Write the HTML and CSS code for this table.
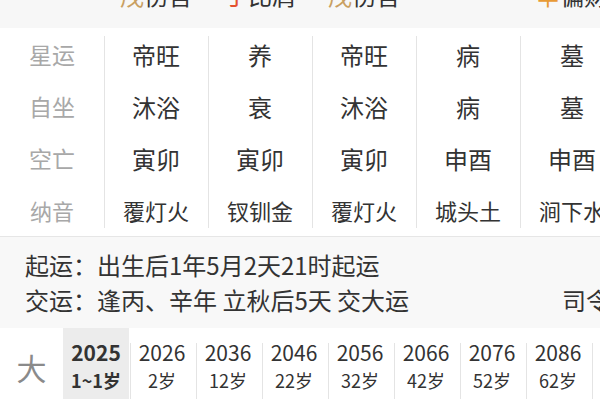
FILE: index.html
```html
<!DOCTYPE html>
<html lang="zh">
<head>
<meta charset="utf-8">
<link rel="stylesheet" href="styles.css">
</head>
<body>
<div class="page">
  <div class="strip">
    <div class="strip-label"></div>
    <div class="strip-cell"><span class="c-earth">戊</span>伤官</div>
    <div class="strip-cell"><span class="c-fire">丁</span>比肩</div>
    <div class="strip-cell"><span class="c-earth">戊</span>伤官</div>
    <div class="strip-cell"></div>
    <div class="strip-cell"><span class="c-metal">辛</span>偏财</div>
  </div>

  <div class="table">
    <div class="col col-label">
      <div class="cell">星运</div>
      <div class="cell">自坐</div>
      <div class="cell">空亡</div>
      <div class="cell small">纳音</div>
    </div>
    <div class="col">
      <div class="cell">帝旺</div>
      <div class="cell">沐浴</div>
      <div class="cell">寅卯</div>
      <div class="cell small">覆灯火</div>
    </div>
    <div class="col">
      <div class="cell">养</div>
      <div class="cell">衰</div>
      <div class="cell">寅卯</div>
      <div class="cell small">钗钏金</div>
    </div>
    <div class="col">
      <div class="cell">帝旺</div>
      <div class="cell">沐浴</div>
      <div class="cell">寅卯</div>
      <div class="cell small">覆灯火</div>
    </div>
    <div class="col">
      <div class="cell">病</div>
      <div class="cell">病</div>
      <div class="cell">申酉</div>
      <div class="cell small">城头土</div>
    </div>
    <div class="col">
      <div class="cell">墓</div>
      <div class="cell">墓</div>
      <div class="cell">申酉</div>
      <div class="cell small">涧下水</div>
    </div>
  </div>

  <div class="info">
    <div class="info-line">起运：出生后1年5月2天21时起运</div>
    <div class="info-line split"><span>交运：逢丙、辛年 立秋后5天 交大运</span><span class="right">司令：戊土</span></div>
  </div>

  <div class="years">
    <div class="ylabel">大</div>
    <div class="ycol active"><div class="yr">2025</div><div class="age">1~1岁</div></div>
    <div class="ycol sep"><div class="yr">2026</div><div class="age">2岁</div></div>
    <div class="ycol sep"><div class="yr">2036</div><div class="age">12岁</div></div>
    <div class="ycol sep"><div class="yr">2046</div><div class="age">22岁</div></div>
    <div class="ycol sep"><div class="yr">2056</div><div class="age">32岁</div></div>
    <div class="ycol sep"><div class="yr">2066</div><div class="age">42岁</div></div>
    <div class="ycol sep"><div class="yr">2076</div><div class="age">52岁</div></div>
    <div class="ycol sep"><div class="yr">2086</div><div class="age">62岁</div></div>
    <div class="ycol sep"><div class="yr">2096</div><div class="age">72岁</div></div>
  </div>
</div>
</body>
</html>
```

FILE: styles.css
```css
html, body {
  margin: 0;
  padding: 0;
  overflow: hidden;
  background: #ffffff;
}
body {
  font-family: "Noto Sans CJK SC", "Noto Sans", sans-serif;
  color: #333333;
  width: 600px;
  height: 400px;
}
.page {
  width: 600px;
  height: 400px;
  overflow: hidden;
}

/* top strip */
.strip {
  display: flex;
  background: #f7f7f7;
  height: 28px;
  overflow: hidden;
}
.strip-label { width: 104px; flex: none; }
.strip-cell {
  width: 104px;
  flex: none;
  text-align: center;
  font-size: 24px;
  line-height: 26px;
  margin-top: -18px;
  white-space: nowrap;
  color: #333;
}
.c-earth { color: #c9a061; }
.c-fire { color: #e4512f; }
.c-metal { color: #e89a35; }

/* table */
.table {
  display: flex;
  background: #fff;
  border-bottom: 1px solid #e6e6e6;
  width: 624px;
}
.col {
  width: 104px;
  flex: none;
  display: flex;
  flex-direction: column;
  background: linear-gradient(#e4e4e4, #e4e4e4) no-repeat left 0 top 8px / 1px calc(100% - 16px);
}
.col-label {
  background: none;
  color: #a8a8a8;
}
.cell {
  height: 52px;
  display: flex;
  align-items: center;
  justify-content: center;
  font-size: 24px;
  white-space: nowrap;
}
.col-label .cell { font-size: 23px; }
.cell.small, .col-label .cell.small { font-size: 22px; }

/* info */
.info {
  background: #f8f8f8;
  padding: 10px 0 11px 25px;
  height: 70px;
}
.info-line {
  font-size: 24px;
  line-height: 35px;
  white-space: nowrap;
  color: #333;
}
.split {
  display: flex;
  width: 657px;
}
.split .right { margin-left: auto; }

/* years */
.years {
  display: flex;
  height: 71px;
  background: #fff;
}
.ylabel {
  width: 63px;
  flex: none;
  display: flex;
  align-items: center;
  justify-content: center;
  font-size: 30px;
  color: #8a8a8a;
  padding-top: 6px;
}
.ycol {
  width: 66px;
  flex: none;
  text-align: center;
  padding-top: 11px;
}
.ycol.active {
  background: #ececec;
  font-weight: bold;
}
.ycol.sep {
  background: linear-gradient(#e4e4e4, #e4e4e4) no-repeat left 1px top 15px / 1px 100%;
}
.yr {
  font-size: 21px;
  line-height: 26px;
  color: #333;
}
.age {
  font-size: 18px;
  line-height: 30px;
  color: #333;
}
```
